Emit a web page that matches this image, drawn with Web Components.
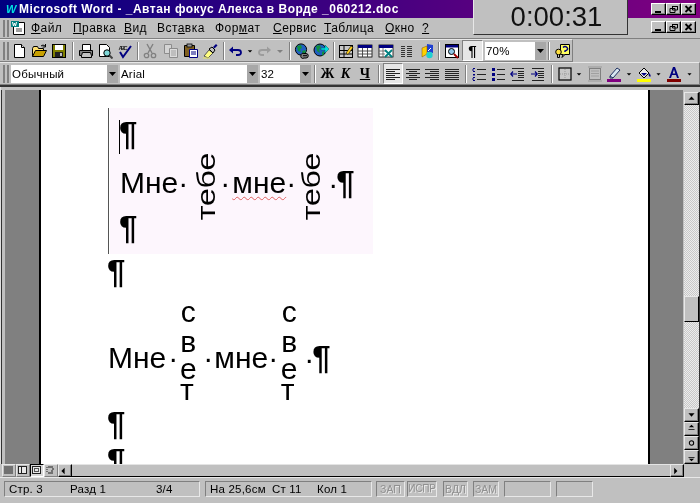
<!DOCTYPE html>
<html><head><meta charset="utf-8"><title>Word</title>
<style>
html,body{margin:0;padding:0;background:#c0c0c0;width:700px;height:503px;overflow:hidden;font-family:"Liberation Sans",Arial,sans-serif;}
</style></head><body>
<word-app>
  <title-bar slot="title">Microsoft Word - _Автан фокус Алекса в Ворде _060212.doc</title-bar>
  <menu-bar slot="menu">
    <menu-item w="42"><u>Ф</u>айл</menu-item><menu-item w="51"><u>П</u>равка</menu-item><menu-item w="33"><u>В</u>ид</menu-item><menu-item w="58">Вст<u>а</u>вка</menu-item><menu-item w="58">Фор<u>м</u>ат</menu-item><menu-item w="51"><u>С</u>ервис</menu-item><menu-item w="61"><u>Т</u>аблица</menu-item><menu-item w="37"><u>О</u>кно</menu-item><menu-item w="12"><u>?</u></menu-item>
  </menu-bar>
  <tool-bar slot="tb1" w="573">
    <tb-btn icon="new" w="20"></tb-btn><tb-btn icon="open" w="20"></tb-btn><tb-btn icon="save" w="20"></tb-btn><tb-sep w="7"></tb-sep>
    <tb-btn icon="print" w="19"></tb-btn><tb-btn icon="preview" w="20"></tb-btn><tb-btn icon="spell" w="20"></tb-btn><tb-sep w="5"></tb-sep>
    <tb-btn icon="cut" w="20"></tb-btn><tb-btn icon="copy" w="21"></tb-btn><tb-btn icon="paste" w="19"></tb-btn><tb-btn icon="brush" w="20"></tb-btn><tb-sep w="8"></tb-sep>
    <tb-btn icon="undo" w="16"></tb-btn><tb-btn icon="dd" w="12"></tb-btn><tb-btn icon="redo" w="16"></tb-btn><tb-btn icon="ddg" w="16"></tb-btn><tb-sep w="4"></tb-sep>
    <tb-btn icon="web" w="19"></tb-btn><tb-btn icon="web2" w="20"></tb-btn><tb-sep w="5"></tb-sep>
    <tb-btn icon="tables" w="19"></tb-btn><tb-btn icon="table" w="20"></tb-btn><tb-btn icon="excel" w="21"></tb-btn><tb-btn icon="cols" w="20"></tb-btn><tb-btn icon="draw" w="21"></tb-btn><tb-sep w="4"></tb-sep>
    <tb-btn icon="docmap" w="21"></tb-btn><tb-btn w="21" pressed glyph="¶"></tb-btn>
    <tb-combo w="61">70%</tb-combo><tb-sep w="6"></tb-sep><tb-btn icon="help" w="21"></tb-btn>
  </tool-bar>
  <tool-bar slot="tb2" w="700">
    <tb-combo w="107">Обычный</tb-combo><tb-combo w="138">Arial</tb-combo><tb-combo w="51">32</tb-combo><tb-sep w="8"></tb-sep>
    <tb-btn w="17" glyph="Ж" kind="b"></tb-btn><tb-btn w="19" glyph="К" kind="i"></tb-btn><tb-btn w="20" glyph="Ч" kind="u"></tb-btn><tb-sep w="8"></tb-sep>
    <tb-btn icon="al" w="20" pressed></tb-btn><tb-btn icon="ac" w="19"></tb-btn><tb-btn icon="ar" w="20"></tb-btn><tb-btn icon="aj" w="20"></tb-btn><tb-sep w="8"></tb-sep>
    <tb-btn icon="num" w="18"></tb-btn><tb-btn icon="bul" w="19"></tb-btn><tb-btn icon="out" w="21"></tb-btn><tb-btn icon="ind" w="20"></tb-btn><tb-sep w="8"></tb-sep>
    <tb-btn icon="border" w="17"></tb-btn><tb-btn icon="dd" w="12"></tb-btn><tb-btn icon="borders" w="20"></tb-btn><tb-btn icon="hi" w="18"></tb-btn><tb-btn icon="dd" w="12"></tb-btn><tb-btn icon="fill" w="18"></tb-btn><tb-btn icon="dd" w="11"></tb-btn><tb-btn icon="color" w="20"></tb-btn><tb-btn icon="dd" w="11"></tb-btn>
  </tool-bar>
  <doc-view slot="doc"></doc-view>
  <h-scroll slot="hs"></h-scroll>
  <status-bar slot="status">
    <st-cell w="196"><st-item w="61">Стр. 3</st-item><st-item w="86">Разд 1</st-item><st-item w="40">3/4</st-item></st-cell>
    <st-cell w="167" ml="5"><st-item w="62">На 25,6см</st-item><st-item w="45">Ст 11</st-item><st-item w="50">Кол 1</st-item></st-cell>
    <st-cell w="29" ml="4" off>ЗАП</st-cell><st-cell w="30" ml="2" off fs="10">ИСПР</st-cell><st-cell w="25" ml="6" off>ВДЛ</st-cell><st-cell w="26" ml="5" off>ЗАМ</st-cell><st-cell w="47" ml="5"></st-cell><st-cell w="37" ml="5"></st-cell>
  </status-bar>
  <timer-box slot="timer">0:00:31</timer-box>
</word-app>
<script>
const lines=(arr,c='#000')=>arr.map(a=>`<rect x="${a[0]}" y="${a[1]}" width="${a[2]}" height="1" fill="${c}"/>`).join('');
const ICONS={
new:'<path d="M3.5 1.5h7l3 3v10h-10z" fill="#fff" stroke="#000"/><path d="M10.5 1.5v3h3" fill="#ddd" stroke="#000"/>',
open:'<path d="M1.5 13.5v-8l1-2h4l1 2h5v2" fill="#ffe070" stroke="#000"/><path d="M1.5 13.5l3-6h11l-3 6z" fill="#c8a000" stroke="#000"/><path d="M10 3q2-2 4 0M14.5 1v3h-3" fill="none" stroke="#000"/>',
save:'<rect x="1.5" y="1.5" width="13" height="13" fill="#808000" stroke="#000"/><rect x="4" y="2" width="8" height="5" fill="#fff"/><rect x="4" y="9" width="8" height="5" fill="#222"/><rect x="9" y="10" width="2" height="3" fill="#c0c0c0"/>',
print:'<path d="M4.5 7.5v-6h8v6" fill="#fff" stroke="#000"/><path d="M1.5 7.5h13v5h-13z" fill="#808080" stroke="#000"/><path d="M3.5 12.5l1-3h8l1 3v2h-10z" fill="#c0c0c0" stroke="#000"/>',
preview:'<path d="M2.5 1.5h7l3 3v9h-10z" fill="#fff" stroke="#000"/><circle cx="10" cy="10" r="3.2" fill="#7fd8d8" stroke="#000"/><path d="M12.5 12.5l3 3" stroke="#444" stroke-width="2"/>',
spell:'<text x="1.5" y="6.5" font-family="Liberation Sans" font-size="6" font-weight="700" fill="#222" textLength="9">ABC</text><path d="M3 9l3 5 8-11" fill="none" stroke="#000080" stroke-width="2"/>',
cut:'<path d="M5 1l5 9M11 1l-5 9" stroke="#808080" stroke-width="1.4"/><circle cx="4.5" cy="12.5" r="2.2" fill="none" stroke="#808080" stroke-width="1.3"/><circle cx="11.5" cy="12.5" r="2.2" fill="none" stroke="#808080" stroke-width="1.3"/>',
copy:'<path d="M1.5 1.5h7v9h-7z" fill="#d4d4d4" stroke="#8c8c8c"/><path d="M6.5 5.5h8v9h-8z" fill="#dcdcdc" stroke="#8c8c8c"/><path d="M8 8h5M8 10h5M8 12h5" stroke="#a0a0a0"/>',
paste:'<path d="M1.5 2.5h10v11h-10z" fill="#806020" stroke="#000"/><rect x="4" y="1" width="5" height="3" fill="#999" stroke="#000" stroke-width=".8"/><path d="M6.5 6.5h8v8h-8z" fill="#fff" stroke="#000080"/><path d="M8 9h5M8 11h5" stroke="#000080"/>',
brush:'<path d="M2 13l5-6 4 3-5 5z" fill="#ffff80" stroke="#555"/><path d="M7 6l3-2 3 3-2 3z" fill="#c0c0c0" stroke="#000"/><path d="M11 4l3-3 1.5 1.5-3 3z" fill="#000080"/><path d="M1 15h7" stroke="#e8e860"/>',
undo:'<path d="M3 7h7q3 0 3 2.500t-3 2.500H8" fill="none" stroke="#000080" stroke-width="1.800"/><path d="M1 7l4-3.500v7z" fill="#000080"/>',
redo:'<path d="M13 7H6q-3 0-3 2.500t3 2.500h2" fill="none" stroke="#9c9c9c" stroke-width="1.800"/><path d="M15 7l-4-3.500v7z" fill="#9c9c9c"/>',
dd:'<path d="M5 7h6l-3 3z" fill="#000"/>',
ddg:'<path d="M5 7h6l-3 3z" fill="#808080"/>',
web:'<circle cx="7" cy="6.5" r="5.600" fill="#2060c0" stroke="#000"/><path d="M3 3l4-1 1 3-2 1 1 3-3-1zM8 8l3-1 1 2-3 2z" fill="#109040"/><path d="M7 12.500a2 2 0 0 1 3-2h2a2.200 2.200 0 0 1 0 4.500h-2a2 2 0 0 1-3-2.500z" fill="#808080" stroke="#000"/><path d="M9 12.700h4" stroke="#000"/>',
web2:'<circle cx="7" cy="7" r="6" fill="#2060c0" stroke="#000"/><path d="M3 3l4-1 1 3-2 1 1 4-3-2zM9 9l2-1v3l-2 2z" fill="#109040"/><path d="M8 5h4V2l4 4-4 4V7H8z" fill="#00e0e0" stroke="#006060" stroke-width=".5"/>',
tables:'<rect x="1.500" y="2.500" width="13" height="12" fill="#c8c8c8" stroke="#000"/><path d="M1.500 7.500h13M1.500 11h13M6 2.500v12" stroke="#000"/><path d="M8 10l5-7 2 1.500-5 7z" fill="#ffd020" stroke="#000" stroke-width=".6"/>',
table:'<rect x="1" y="2" width="14" height="12" fill="#fff" stroke="#000" stroke-width=".8"/><rect x="1" y="2" width="14" height="3" fill="#000080"/><path d="M1 8h14M1 11h14M5.500 5v9M10.500 5v9" stroke="#404040" stroke-width=".9"/>',
excel:'<rect x="1" y="2" width="14" height="12" fill="#fff" stroke="#000" stroke-width=".8"/><rect x="1" y="2" width="14" height="3" fill="#000080"/><path d="M1 8h7M1 11h6M5 5v9" stroke="#555" stroke-width=".8"/><path d="M7 7l7 7M14 7l-7 7" stroke="#008080" stroke-width="1.800"/>',
cols:'<path d="M3 3h4v1H3zM3 5h4v1H3zM3 7h4v1H3zM3 9h4v1H3zM3 11h4v1H3zM3 13h4v1H3zM9 3h5v1H9zM9 5h5v1H9zM9 7h5v1H9zM9 9h5v1H9zM9 11h5v1H9zM9 13h5v1H9z" fill="#333"/>',
draw:'<path d="M8 1l6 1v8l-6-1z" fill="#2040d0"/><path d="M3 5l5-2v8l-5 3z" fill="#ffd000" stroke="#805000" stroke-width=".5"/><circle cx="10.500" cy="12" r="3.200" fill="#20d0d0"/><path d="M9 8l3-3" stroke="#fff"/>',
docmap:'<rect x="1.500" y="1.500" width="13" height="13" fill="#fff" stroke="#000"/><rect x="2" y="2" width="12" height="2.500" fill="#000080"/><circle cx="7.500" cy="8.500" r="3" fill="#90c8e8" stroke="#000"/><path d="M10 11l4 4" stroke="#a00000" stroke-width="1.800"/>',
help:'<path d="M5.500 1.500h9v10h-9z" fill="#ffff60" stroke="#000"/><path d="M8 4.500q2-2 4 0t-2 3.500v1" fill="none" stroke="#000080" stroke-width="1.500"/><circle cx="3.500" cy="9" r="2.800" fill="#ffe040" stroke="#000"/><path d="M2.500 12v2.500h2V12M8 11.500l-1 3 3-3" fill="#c0c0c0" stroke="#000"/>',
al:lines([[1,3,14],[1,5,9],[1,7,14],[1,9,9],[1,11,14],[1,13,9]],'#222'),
ac:lines([[1,3,14],[4,5,8],[1,7,14],[4,9,8],[1,11,14],[4,13,8]],'#222'),
ar:lines([[1,3,14],[6,5,9],[1,7,14],[6,9,9],[1,11,14],[6,13,9]],'#222'),
aj:lines([[1,3,14],[1,5,14],[1,7,14],[1,9,14],[1,11,14],[1,13,14]],'#222'),
num:lines([[2,2,2],[2,5,2],[2,8,2],[2,11,2],[2,14,2]],'#000080')+lines([[6,3,9],[6,8,9],[6,13,9]],'#222')+'<path d="M2 3v2M3 8v2M2 12v2" stroke="#000080"/>',
bul:'<rect x="2" y="2" width="3" height="3" fill="#000080"/><rect x="2" y="7" width="3" height="3" fill="#000080"/><rect x="2" y="12" width="3" height="3" fill="#000080"/>'+lines([[7,3,8],[7,8,8],[7,13,8]],'#222'),
out:lines([[2,2,12],[8,5,6],[8,7,6],[8,9,6],[8,11,6],[2,14,12]],'#222')+'<path d="M7 8H1M3 5.500L.8 8 3 10.500" fill="none" stroke="#000080" stroke-width="1.200"/>',
ind:lines([[2,2,12],[8,5,6],[8,7,6],[8,9,6],[8,11,6],[2,14,12]],'#222')+'<path d="M1 8h6M5 5.500L7.200 8 5 10.500" fill="none" stroke="#000080" stroke-width="1.200"/>',
border:'<rect x="2" y="2" width="12" height="12" fill="#c8c8c8" stroke="#000" stroke-width="1.200"/><path d="M8 3v10M3 8h10" stroke="#999" stroke-dasharray="1 1"/>',
borders:'<rect x="2.500" y="2.500" width="11" height="11" fill="none" stroke="#808080"/><path d="M4 5h8M4 7.500h8M4 10h8" stroke="#a0a0a0"/><path d="M1 1h14M1 15h14" stroke="#9a9a9a"/>',
hi:'<path d="M4 10l7-8 3 2-7 8-3 0z" fill="#d8e8f0" stroke="#203060"/><path d="M4 10l3 2" stroke="#203060"/><path d="M1 13h14v3H1z" fill="#800080"/>',
fill:'<path d="M3 7l5-5 5 5-5 5z" fill="#e8e8e8" stroke="#000"/><path d="M13 7c2 2 2 3 1 4-1-1-2-2-1-4z" fill="#000080"/><path d="M5 7h6l-3 3z" fill="#000080"/><path d="M1 13h14v3H1z" fill="#ffff00"/>',
color:'<path d="M3 12L7 1h2l4 11h-2l-1-3H6l-1 3zM6.700 7.500h2.600L8 3.500z" fill="#000080"/><path d="M1 13h14v3H1z" fill="#800000"/>'
};
const svg=n=>`<svg width="16" height="16" viewBox="0 0 16 16" style="display:block">${ICONS[n]||''}</svg>`;
function def(name,html,init){customElements.define(name,class extends HTMLElement{constructor(){super();this.attachShadow({mode:'open'}).innerHTML=typeof html==='function'?html(this):html;}connectedCallback(){if(init)init(this);}});}

def('word-app',`<style>:host{display:block;position:relative;width:700px;height:503px;background:#c0c0c0;overflow:hidden;filter:blur(.3px)}
.col{display:flex;flex-direction:column;height:100%}</style>
<div class="col"><slot name="title"></slot><slot name="menu"></slot><slot name="tb1"></slot><slot name="tb2"></slot><slot name="doc"></slot><slot name="hs"></slot><slot name="status"></slot></div><slot name="timer"></slot>`);

def('win-btn',`<style>:host{display:block;width:15px;height:12px;box-sizing:border-box;background:#c0c0c0;border:1px solid;border-color:#fff #000 #000 #fff;box-shadow:inset -1px -1px 0 #808080}
svg{display:block}</style><svg width="13" height="10" viewBox="0 0 13 10"></svg>`,el=>{
 const k=el.getAttribute('k');const s=el.shadowRoot.querySelector('svg');
 s.innerHTML=k==='min'?'<rect x="3" y="7" width="6" height="2" fill="#000"/>':k==='max'?'<path d="M5.500 2.500h5v3.500h-5zM3 4.500h5v4H3z" fill="#c0c0c0" stroke="#000"/><path d="M5 2h6v1H5zM3 4h5v1H3z" fill="#000"/>':'<path d="M3.500 2l6 6M9.500 2l-6 6" stroke="#000" stroke-width="1.800"/>';});
const winBtns=`<win-btn k="min"></win-btn><win-btn k="max"></win-btn><win-btn k="cls"></win-btn>`;

def('title-bar',`<style>:host{display:flex;align-items:center;height:18px;box-sizing:border-box;background:linear-gradient(90deg,#000080,#800080);color:#fff;font:700 12px/17px "Liberation Sans",sans-serif;letter-spacing:.49px;white-space:nowrap}
.ic{width:12px;margin:0 1px 0 6px;color:#00e0e0;font:italic 700 11px/17px "Liberation Sans",sans-serif;letter-spacing:0}
.t{flex:1;overflow:hidden}.b{display:flex;margin-right:4px}</style>
<span class="ic">W</span><span class="t"><slot></slot></span><span class="b">${winBtns}</span>`);

def('menu-bar',`<style>:host{display:flex;align-items:center;height:21px;box-sizing:border-box;padding-left:3px;font:12px/19px "Liberation Sans",sans-serif;color:#000;border-bottom:1px solid #808080}
.g{width:6px;height:17px;box-sizing:border-box;border-left:2px solid #808080;border-right:2px solid #808080;margin-right:1px}
.ic{margin-right:5px}.m{display:flex;flex:1;padding-top:1px}.b{display:flex;margin-right:4px;margin-top:-3px}</style>
<span class="g"></span><span class="ic"><svg width="16" height="16" viewBox="0 0 16 16" style="display:block"><path d="M3.500 2.500h11v12h-11z" fill="#fff" stroke="#000"/><path d="M1 1h8v6H1z" fill="#008080"/><path d="M2.500 2l1 4 1-3 1 3 1-4" fill="none" stroke="#fff"/><path d="M6 9h6M6 11h6" stroke="#404040"/></svg></span><span class="m"><slot></slot></span><span class="b">${winBtns}</span>`);
def('menu-item',el=>`<style>:host{display:block;width:${el.getAttribute('w')}px;flex:none;letter-spacing:.45px;white-space:nowrap}</style><slot></slot>`);

def('tool-bar',el=>`<style>:host{display:flex;align-items:center;height:23px;width:${el.getAttribute('w')}px;box-sizing:border-box;padding-left:3px;border-top:1px solid #e8e8e8;border-bottom:1px solid #808080;border-right:1px solid #808080}
.g{width:6px;height:18px;box-sizing:border-box;border-left:2px solid #808080;border-right:2px solid #808080;flex:none}</style><span class="g"></span><slot></slot>`);

def('tb-btn',el=>{const w=el.getAttribute('w'),p=el.hasAttribute('pressed'),g=el.getAttribute('glyph'),k=el.getAttribute('kind'),i=el.getAttribute('icon');
 const fs=k?'font:700 '+(k==='i'?'italic ':'')+'14px "Liberation Serif",serif;'+(k==='u'?'text-decoration:underline;':''):'font:700 15px "Liberation Sans",sans-serif;';
 return `<style>:host{display:flex;flex:none;align-items:center;justify-content:center;width:${w}px;height:21px;box-sizing:border-box;color:#000;${p?'background:#e6e6e6;border:1px solid;border-color:#808080 #fff #fff #808080;':''}}
 .g{${fs}}</style>${g?`<span class="g">${g}</span>`:svg(i)}`;});
def('tb-sep',el=>`<style>:host{display:flex;flex:none;justify-content:center;width:${el.getAttribute('w')}px;height:18px}
i{display:block;width:2px;box-sizing:border-box;border-left:1px solid #808080;border-right:1px solid #fff}</style><i></i>`);
def('tb-combo',el=>`<style>:host{display:flex;flex:none;width:${el.getAttribute('w')}px;margin-left:2px;height:18px;background:#fff;box-sizing:border-box;font:11.500px/18px "Liberation Sans",sans-serif;letter-spacing:.2px;color:#000;white-space:nowrap}
.t{flex:1;padding-left:1px;overflow:hidden}.a{width:11px;background:#a8a8a8;display:flex;align-items:center;justify-content:center}</style>
<span class="t"><slot></slot></span><span class="a"><svg width="7" height="4" viewBox="0 0 7 4"><path d="M0 0h7L3.500 4z" fill="#000"/></svg></span>`);

def('doc-view',`<style>:host{display:flex;height:379px;box-sizing:border-box;border-top:2px solid #333;background:#c0c0c0;padding-left:1px;box-shadow:inset 1px 0 0 #e0e0e0}
.area{flex:1;display:flex;margin-top:3px;border-left:1px solid #333;padding-left:3px;min-width:0}
.gl{width:34px;background:#808080}.gr{width:33px;background:#808080}.bk{width:2px;background:#000}
.page{width:607px;background:#fff;overflow:hidden;font:30px/34.500px "Liberation Sans",sans-serif;color:#000;padding-left:67px;box-sizing:border-box;white-space:nowrap}
.cell{margin-top:18px;width:265px;height:146px;box-sizing:border-box;border-left:1px solid #555;padding:9px 0 0 11px;background:linear-gradient(90deg,#fff 1px,#fdf6fd 1px);position:relative}
.row{display:flex;align-items:flex-start;height:59px}.row>span{flex:none}
.t{margin-top:14px}.sp{display:inline-block;width:8px;text-align:center}
.sl{display:inline-block;width:12px;text-align:left}
.pc{font-weight:700;font-size:33px;margin-left:-1px}
.frame{width:34px;height:68px;padding-left:12px;box-sizing:border-box}
.frame b{display:block;font-weight:400;writing-mode:vertical-rl;transform:rotate(180deg) scale(.85,1.07);line-height:18px;height:68px;text-align:center}
.f2{width:34px;padding-left:9px}
.wave{text-decoration:underline wavy #e06060 1px;text-underline-offset:3px}
.caret{position:absolute;left:10px;top:12px;width:1px;height:34px;background:#000}
.p{height:34.500px}.pm{margin-top:1px}
.row2{display:flex;align-items:flex-start;height:110px;margin-top:7.500px}.row2>span{flex:none}
.t2{margin-top:44px}
.st{width:30px;display:flex;flex-direction:column;align-items:center}
.st i{font-style:normal;display:block}
.tl{margin-left:-3px}</style>
<div class="area"><div class="gl"></div><div class="bk"></div>
<div class="page">
<div class="cell"><span class="caret"></span>
<div class="p"><span class="pc">¶</span></div>
<div class="row"><span class="t">Мне<span class="sp">·</span></span><span class="frame"><b>тебе</b></span><span class="t"><span class="sl">·</span><span class="wave">мне</span><span class="sp">·</span></span><span class="frame f2"><b>тебе</b></span><span class="t"><span class="sp" style="width:9px">·</span><span class="pc">¶</span></span></div>
<div class="p"><span class="pc">¶</span></div>
</div>
<div class="p pm"><span class="pc">¶</span></div>
<div class="row2"><span class="t2">Мне<span class="sp" style="width:14px">·</span></span>
<span class="st" style="margin-left:-7px"><i style="height:30px;line-height:30px">с</i><i style="height:29.500px;line-height:29.500px">в</i><i style="height:24px;line-height:24px">е</i><i class="tl" style="height:18px;line-height:18px">т</i></span>
<span class="t2"><span class="sl" style="width:11px">·</span>мне<span class="sp" style="width:10px">·</span></span>
<span class="st" style="margin-left:-4px"><i style="height:30px;line-height:30px">с</i><i style="height:29.500px;line-height:29.500px">в</i><i style="height:24px;line-height:24px">е</i><i class="tl" style="height:18px;line-height:18px">т</i></span>
<span class="t2"><span class="sp" style="width:9px">·</span><span class="pc">¶</span></span></div>
<div class="p"><span class="pc">¶</span></div>
<div class="p" style="margin-top:2px"><span class="pc">¶</span></div>
</div>
<div class="bk"></div><div class="gr"></div></div>
<v-scroll></v-scroll>`);

def('scroll-btn',el=>{const d=el.getAttribute('d');const P={u:'M4 7h7L7.500 3z',d:'M4 4h7L7.500 8z',l:'M7 2v8L3 6z',r:'M4 2v8l4-4z',pp:'M4.500 4l3-3 3 3zM4 6h7v1H4z',nn:'M4 6h7v1H4zM4.500 8l3 3 3-3z'};
 return `<style>:host{display:flex;flex:none;align-items:center;justify-content:center;box-sizing:border-box;background:#c0c0c0;width:${el.getAttribute('w')||15}px;height:${el.getAttribute('h')||14}px;border:1px solid;border-color:#e8e8e8 #000 #000 #e8e8e8;box-shadow:inset -1px -1px 0 #808080}</style>
 <svg width="15" height="12" viewBox="0 0 15 12">${d==='o'?'<circle cx="7.500" cy="6" r="2.500" fill="none" stroke="#000" stroke-width="1.200"/>':`<path d="${P[d]}" fill="#000"/>`}</svg>`;});

def('v-scroll',`<style>:host{display:flex;flex-direction:column;width:16px;margin-top:5px;box-sizing:border-box;border-right:1px solid #333;flex:none}
.tr{background-image:linear-gradient(45deg,#c8c8c8 25%,transparent 25%,transparent 75%,#c8c8c8 75%),linear-gradient(45deg,#c8c8c8 25%,transparent 25%,transparent 75%,#c8c8c8 75%);background-size:2px 2px;background-position:0 0,1px 1px;background-color:#ececec}
.a{height:191px}.b{flex:1}
.th{height:26px;box-sizing:border-box;background:#c0c0c0;border:1px solid;border-color:#e8e8e8 #000 #000 #e8e8e8}</style>
<scroll-btn d="u" h="13"></scroll-btn><div class="tr a"></div><div class="th"></div><div class="tr b"></div>
<scroll-btn d="d"></scroll-btn><scroll-btn d="pp"></scroll-btn><scroll-btn d="o"></scroll-btn><scroll-btn d="nn"></scroll-btn>`);

def('view-btn',el=>{const k=el.getAttribute('k');const I={n:'<path d="M2 3h9M2 5h9M2 7h9M2 9h9" stroke="#222"/>',o:'<rect x="2.500" y="2.500" width="8" height="7" fill="#e8e8e8" stroke="#222"/><path d="M5.500 3v6" stroke="#222"/>',p:'<rect x="2.500" y="2.500" width="8" height="7" fill="#e8e8e8" stroke="#222"/><rect x="4.500" y="4.500" width="4" height="3" fill="none" stroke="#555"/>',s:'<path d="M4 3h5M8 5h2M7 7h2M4 9h5" stroke="#222"/><path d="M3 3v6" stroke="#222" stroke-dasharray="1 1"/>'};
 return `<style>:host{display:block;flex:none;width:14px;height:13px;box-sizing:border-box;${el.hasAttribute('on')?'border:1px solid;border-color:#000 #fff #fff #000;background:#d8d8d8':'border:1px solid;border-color:#e8e8e8 #808080 #808080 #e8e8e8'}}svg{display:block;margin:-1px 0 0 -1px}</style><svg width="13" height="12" viewBox="0 0 13 12">${I[k]}</svg>`;});

def('h-scroll',`<style>:host{display:flex;height:13px;box-sizing:border-box;padding-left:2px;background:#c0c0c0}
.v{display:flex;flex:none;width:56px}.tr{flex:none;width:598px;border-bottom:1px solid #000;box-sizing:border-box;border-top:1px solid #e4e4e4}</style>
<div class="v"><view-btn k="n"></view-btn><view-btn k="o"></view-btn><view-btn k="p" on></view-btn><view-btn k="s"></view-btn></div>
<scroll-btn d="l" w="14" h="13"></scroll-btn><div class="tr"></div><scroll-btn d="r" w="14" h="13"></scroll-btn>`);

def('status-bar',`<style>:host{display:flex;height:25px;box-sizing:border-box;padding:3px 0 5px 4px;border-top:1px solid #e8e8e8;font:11.500px/16px "Liberation Sans",sans-serif;color:#000}</style><slot></slot>`);
def('st-cell',el=>{const off=el.hasAttribute('off'),fs=el.getAttribute('fs')||10.5;return `<style>:host{display:flex;flex:none;justify-content:${off?'center':'flex-start'};width:${el.getAttribute('w')}px;margin-left:${el.getAttribute('ml')||0}px;height:16px;box-sizing:border-box;border:1px solid;border-color:#808080 #e8e8e8 #e8e8e8 #808080;padding-left:${off?0:4}px;overflow:hidden;line-height:14px;white-space:nowrap;letter-spacing:.2px;${off?`color:#909090;text-shadow:1px 1px 0 #e8e8e8;font-size:${fs}px;letter-spacing:${el.getAttribute('fs')?'-.2px':'0'};`:''}}</style><slot></slot>`;});
def('st-item',el=>`<style>:host{display:block;flex:none;width:${el.getAttribute('w')}px}</style><slot></slot>`);
def('timer-box',`<style>:host{position:absolute;left:473px;top:0;width:155px;height:35px;box-sizing:border-box;padding-left:12px;background:#c0c0c0;border:1px solid;border-color:#e8e8e8 #333 #333 #e8e8e8;border-top:0;font:27.500px/33px "Liberation Sans",sans-serif;color:#111;text-align:center}</style><slot></slot>`);
</script>
</body></html>
